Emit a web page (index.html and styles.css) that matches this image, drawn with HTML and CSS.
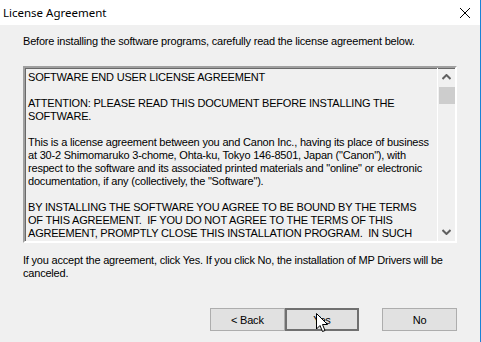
FILE: index.html
```html
<!DOCTYPE html>
<html lang="en">
<head>
    <meta charset="UTF-8">
    <title>License Agreement</title>
    <link rel="stylesheet" href="styles.css">
</head>
<body>
    <div class="window">
        <div class="titlebar">
            <span class="title">License Agreement</span>
            <svg class="close" width="10" height="10" viewBox="0 0 10 10">
                <path d="M0 0 L10 10 M10 0 L0 10" stroke="#000" stroke-width="1"/>
            </svg>
        </div>

        <div class="content">
            <p class="intro">Before installing the software programs, carefully read the license agreement below.</p>

            <!-- license text box -->
            <div class="licbox">
                <div class="lictext">
                    <p>SOFTWARE END USER LICENSE AGREEMENT</p>
                    <p>ATTENTION: PLEASE READ THIS DOCUMENT BEFORE INSTALLING THE SOFTWARE.</p>
                    <p>This is a license agreement between you and Canon Inc., having its place of business at 30-2 Shimomaruko 3-chome, Ohta-ku, Tokyo 146-8501, Japan ("Canon"), with respect to the software and its associated printed materials and "online" or electronic documentation, if any (collectively, the "Software").</p>
                    <p>BY INSTALLING THE SOFTWARE YOU AGREE TO BE BOUND BY THE TERMS OF THIS AGREEMENT.&nbsp; IF YOU DO NOT AGREE TO THE TERMS OF THIS AGREEMENT, PROMPTLY CLOSE THIS INSTALLATION PROGRAM.&nbsp; IN SUCH</p>
                </div>
                <div class="scrollbar">
                    <svg class="arrow" width="9" height="6" viewBox="0 0 9 6">
                        <path d="M0.5 5 L4.5 1 L8.5 5" fill="none" stroke="#606060" stroke-width="2"/>
                    </svg>
                    <div class="thumb"></div>
                    <div class="track"></div>
                    <svg class="arrow" width="9" height="6" viewBox="0 0 9 6">
                        <path d="M0.5 1 L4.5 5 L8.5 1" fill="none" stroke="#606060" stroke-width="2"/>
                    </svg>
                </div>
            </div>

            <p class="note">If you accept the agreement, click Yes. If you click No, the installation of MP Drivers will be canceled.</p>

            <div class="buttons">
                <button class="btn">&lt; Back</button>
                <button class="btn default">Yes</button>
                <button class="btn gap">No</button>
            </div>
        </div>

        <!-- mouse pointer over the Yes button -->
        <svg class="cursor" width="13" height="20" viewBox="0 0 13 20">
            <path d="M0.5 0.5 L0.5 16 L4 12.5 L6.5 18.5 L9 17.5 L6.5 11.5 L11.5 11.5 Z" fill="#fff" stroke="#000" stroke-width="1"/>
        </svg>
    </div>
</body>
</html>
```

FILE: styles.css
```css
body {
    margin: 0;
    padding: 0;
    background: #f0f0f0;
}
.window {
    position: relative;
    width: 480px;
    height: 342px;
    border-right: 1px solid #1883d7;
    background: #f0f0f0;
    font-family: "Liberation Sans", Arial, sans-serif;
    font-size: 11px;
    letter-spacing: -0.2px;
    color: #000;
}
.titlebar {
    height: 25px;
    background: #fff;
    display: flex;
    align-items: center;
    justify-content: space-between;
    padding: 0 10px 0 3px;
}
.title {
    font-family: "Noto Sans", "Open Sans", sans-serif;
    font-size: 11.5px;
    letter-spacing: 0;
}
.content {
    padding: 0 23px;
}
.intro {
    margin: 0;
    padding-top: 10px;
    height: 31px;
}
.licbox {
    display: flex;
    width: 430px;
    height: 173px;
    border-style: solid;
    border-width: 2px;
    border-color: #a0a0a0 #fff #fff #a0a0a0;
    box-shadow: inset 1px 1px 0 #696969;
}
.lictext {
    flex: 1;
    padding: 3px 4px 0 3px;
    overflow: hidden;
    line-height: 13px;
    color: #000;
}
.lictext p {
    margin: 0 0 13px 0;
}
.scrollbar {
    width: 17px;
    border-left: 1px solid #fff;
    display: flex;
    flex-direction: column;
    align-items: center;
}
.arrow {
    margin: 6px 0;
}
.thumb {
    width: 16px;
    height: 17px;
    background: #cdcdcd;
    margin-top: 1px;
}
.track {
    flex: 1;
}
.note {
    margin: 0;
    padding-top: 11px;
    line-height: 13px;
}
.buttons {
    display: flex;
    padding: 28px 0 0 187px;
}
.btn {
    width: 75px;
    height: 23px;
    padding: 0;
    margin: 0;
    background: #e1e1e1;
    border: 1px solid #adadad;
    font-family: "Liberation Sans", Arial, sans-serif;
    font-size: 11px;
    letter-spacing: -0.2px;
    color: #000;
}
.btn.default {
    border: 2px solid #707070;
}
.btn.gap {
    margin-left: 23px;
}
.cursor {
    position: absolute;
    left: 316px;
    top: 313px;
}
```
